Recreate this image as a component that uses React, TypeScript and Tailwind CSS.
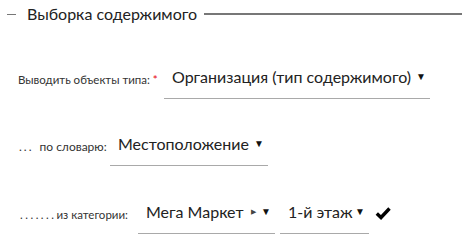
function Select({ label, width, extra }: { label: string; width: string; extra?: boolean }) {
  return (
    <div className={`flex h-[38px] shrink-0 items-center whitespace-nowrap border-b border-[#a9a9a9] pb-[6px] pl-2 ${width}`}>
      <span className="text-[16px] text-[#222]">{label}</span>
      {extra && <span className="ml-[7px] text-[7px] text-[#444]">▶</span>}
      <span className="ml-auto pr-[4px] text-[10px] text-[#111]">▼</span>
    </div>
  );
}

export default function App() {
  return (
    <div className="h-[252px] w-[462px] bg-white font-['Lato',sans-serif] text-[#222]">
      <div className="flex h-[28px] items-center">
        <div className="ml-[7px] h-px w-[9px] bg-[#777]" />
        <span className="ml-[11px] mr-[7px] whitespace-nowrap text-[16px] leading-none text-[#222]">
          Выборка содержимого
        </span>
        <div className="h-[2px] flex-1 bg-[#777]" />
      </div>

      <div className="mt-[33px] flex items-center pl-[18px]">
        <span className="w-[146px] shrink-0 whitespace-nowrap text-[11.5px] text-[#333]">
          Выводить объекты типа: <span className="text-red-600">*</span>
        </span>
        <Select label="Организация (тип содержимого)" width="w-[266px]" />
      </div>

      <div className="mt-[29px] flex items-center pl-[19px]">
        <span className="w-[91px] shrink-0 whitespace-nowrap text-[12px] text-[#333]">
          <span className="mr-[6px] tracking-[2px]">...</span>по словарю:
        </span>
        <Select label="Местоположение" width="w-[158px]" />
      </div>

      <div className="mt-[30px] flex items-center pl-[20px]">
        <span className="w-[118px] shrink-0 whitespace-nowrap text-[11.5px] text-[#333]">
          <span className="tracking-[2.5px]">.......</span>из категории:
        </span>
        <Select label="Мега Маркет" width="w-[137px]" extra />
        <div className="ml-[5px]">
          <Select label="1-й этаж" width="w-[89px]" />
        </div>
        <svg className="ml-[6px] -mt-[4px]" width="16" height="14" viewBox="0 0 16 14">
          <polyline points="1.8,7.5 6,11.5 14.5,2.5" fill="none" stroke="#000" strokeWidth="3.4" />
        </svg>
      </div>
    </div>
  );
}
